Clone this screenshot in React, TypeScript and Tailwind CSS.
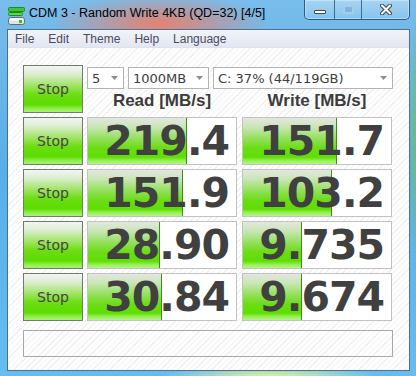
import React from 'react';

type Row = { read: string; write: string; readBar: number; writeBar: number };

// bar widths are in px, measured against the 148px inner width of a value cell
const rows: Row[] = [
  { read: '219.4', write: '151.7', readBar: 99, writeBar: 94 },
  { read: '151.9', write: '103.2', readBar: 95, writeBar: 89 },
  { read: '28.90', write: '9.735', readBar: 72, writeBar: 59 },
  { read: '30.84', write: '9.674', readBar: 74, writeBar: 59 },
];

const menu = ['File', 'Edit', 'Theme', 'Help', 'Language'];

const DriveIcon = () => (
  <svg width="17" height="18" viewBox="0 0 17 18">
    <rect x="0.5" y="0.5" width="16" height="4" rx="1" fill="#3cc43c" stroke="#1f8a1f" />
    <rect x="0.5" y="5.5" width="14" height="3" rx="1" fill="#58d858" stroke="#1f8a1f" />
    <rect x="0.5" y="10.5" width="16" height="7" rx="2" fill="#e4e4e4" stroke="#6b6b6b" />
    <rect x="2" y="11.5" width="13" height="2" fill="#ffffff" />
    <rect x="11" y="13" width="3" height="3" fill="#2fbf2f" />
  </svg>
);

const Arrow = () => (
  <svg width="7" height="4" viewBox="0 0 7 4">
    <path d="M0 0 L7 0 L3.5 4 Z" fill="#8e8e8e" />
  </svg>
);

const Combo = ({ label, width }: { label: string; width: string }) => (
  <div className={`${width} h-[22px] border border-[#b4b4b4] bg-white flex items-center justify-between pl-[4px] pr-[5px]`}>
    <span className="font-['DejaVu_Sans',sans-serif] text-[13px] leading-none text-[#3d3d3d]">{label}</span>
    <Arrow />
  </div>
);

const StopButton = () => (
  <div className="w-[60px] h-[48px] shrink-0 border border-[#6f7d6c] bg-[linear-gradient(180deg,#f4f5f3_0%,#dbeed0_18%,#a2e468_42%,#6ddd12_62%,#5cdc00_84%,#8ced4a_92%,#a8f270_100%)] flex items-center justify-center">
    <span className="font-['DejaVu_Sans',sans-serif] text-[14px] text-[#454545]">Stop</span>
  </div>
);

const ValueCell = ({ value, bar }: { value: string; bar: number }) => (
  <div className="relative w-[150px] h-[48px] shrink-0 border border-[#c2c2c2] bg-white">
    <div
      className="absolute left-0 top-0 bottom-0 border-r border-[#3b8f12] bg-[linear-gradient(180deg,#e4e6e2_0%,#c8e6b4_20%,#92e05a_45%,#6cdc16_65%,#5ee000_85%,#9aef5c_93%,#b4f484_100%)]"
      style={{ width: bar }}
    />
    <div className="relative h-full flex items-center justify-end pr-[7px]">
      <span className="font-['DejaVu_Sans',sans-serif] font-bold text-[41px] leading-none tracking-[-1px] text-[#404040]">
        {value}
      </span>
    </div>
  </div>
);

const CaptionButtons = () => (
  <div className="ml-auto mr-[6px] flex h-[20px] rounded-b-[5px] border border-t-0 border-[#2f5a80] overflow-hidden shadow-[inset_0_0_0_1px_rgba(255,255,255,0.35)]">
    <div className="w-[29px] flex items-center justify-center bg-[linear-gradient(180deg,rgba(255,255,255,0.35),rgba(255,255,255,0.12))]">
      <div className="mt-[4px] w-[12px] h-[4px] bg-white border border-[#3a4a5a] rounded-[1px]" />
    </div>
    <div className="w-[27px] flex items-center justify-center border-l border-[#3d6a92] bg-[linear-gradient(180deg,rgba(255,255,255,0.35),rgba(255,255,255,0.12))]">
      <div className="w-[11px] h-[9px] border-2 border-[#a8cdea] bg-[#7fb6e0]" />
    </div>
    <div className="w-[48px] flex items-center justify-center border-l border-[#3d6a92] bg-[linear-gradient(180deg,rgba(255,255,255,0.35),rgba(255,255,255,0.12))]">
      <svg width="12" height="11" viewBox="0 0 12 11">
        <path d="M2 1.5 L10 9.5 M10 1.5 L2 9.5" stroke="#3a4a5a" strokeWidth="4" strokeLinecap="round" />
        <path d="M2 1.5 L10 9.5 M10 1.5 L2 9.5" stroke="#ffffff" strokeWidth="2" strokeLinecap="round" />
      </svg>
    </div>
  </div>
);

const App: React.FC = () => {
  return (
    <div className="w-[416px] h-[376px] overflow-hidden flex flex-col bg-[image:radial-gradient(ellipse_110px_30px_at_160px_24px,rgba(236,126,104,0.95),rgba(236,126,104,0)),radial-gradient(ellipse_110px_14px_at_270px_378px,rgba(240,248,140,1),rgba(240,248,140,0)),radial-gradient(ellipse_7px_130px_at_416px_140px,rgba(110,190,110,1),rgba(110,190,110,0)),linear-gradient(180deg,#78bdeb_0%,#5aaee6_45%,#66bdf0_100%)]">
      {/* title bar */}
      <div className="h-[29px] shrink-0 flex items-start">
        <div className="ml-[8px] mt-[7px]">
          <DriveIcon />
        </div>
        <span className="ml-[4px] mt-[6px] font-['Liberation_Sans',sans-serif] text-[12.5px] leading-[15px] text-black">
          CDM 3 - Random Write 4KB (QD=32) [4/5]
        </span>
        <CaptionButtons />
      </div>

      {/* client area */}
      <div className="ml-[7px] w-[403px] h-[342px] border border-[#4e6f90] bg-white flex flex-col">
        <div className="h-[18px] shrink-0 flex bg-[linear-gradient(180deg,#f1f3f9_0%,#e3e7f2_100%)] border-b border-[#dde2ec]">
          {menu.map((m) => (
            <span key={m} className="px-[7px] font-['Liberation_Sans',sans-serif] text-[12px] leading-[18px] text-[#4a4a5c]">
              {m}
            </span>
          ))}
        </div>

        <div className="flex-1 pl-[15px] pt-[17px] bg-[repeating-linear-gradient(135deg,#ffffff_0px,#ffffff_3px,#f1f1f1_3px,#f1f1f1_4px)]">
          <div className="flex">
            <StopButton />
            <div className="ml-[4px] flex flex-col">
              <div className="mt-[2px] flex gap-[4px]">
                <Combo label="5" width="w-[37px]" />
                <Combo label="1000MB" width="w-[81px]" />
                <Combo label="C: 37% (44/119GB)" width="w-[180px]" />
              </div>
              <div className="flex gap-[5px] h-[24px]">
                {['Read [MB/s]', 'Write [MB/s]'].map((h) => (
                  <div key={h} className="w-[150px] text-center font-['Liberation_Sans',sans-serif] font-bold text-[17px] leading-[24px] text-[#3c3c3c]">
                    {h}
                  </div>
                ))}
              </div>
            </div>
          </div>

          {rows.map((r) => (
            <div key={r.read} className="mt-[4px] flex">
              <StopButton />
              <div className="ml-[4px]">
                <ValueCell value={r.read} bar={r.readBar} />
              </div>
              <div className="ml-[5px]">
                <ValueCell value={r.write} bar={r.writeBar} />
              </div>
            </div>
          ))}

          <div className="mt-[9px] w-[370px] h-[27px] border border-[#a8a8a8]" />
        </div>
      </div>
    </div>
  );
};

export default App;
